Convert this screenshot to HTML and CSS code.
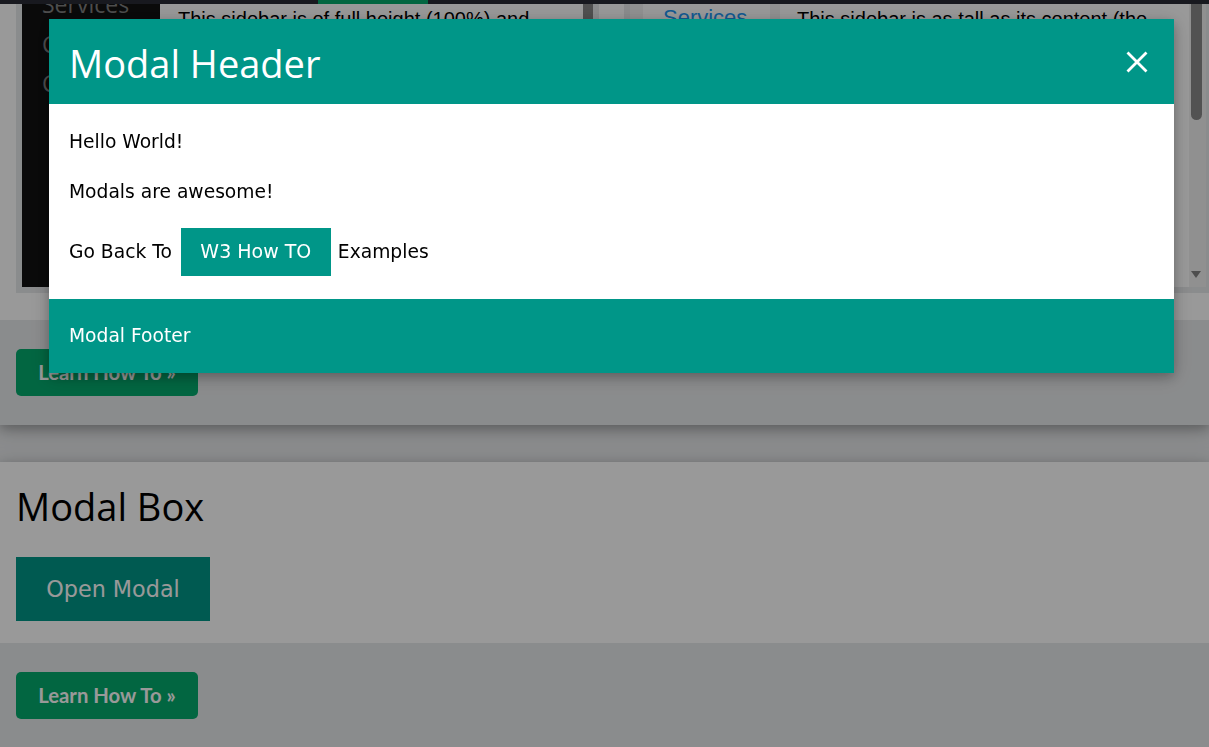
FILE: index.html
```html
<!DOCTYPE html>
<html lang="en">
<head>
<meta charset="utf-8">
<title>Modal Box</title>
<link rel="stylesheet" href="styles.css">
</head>
<body>
<div class="page">
  <div class="topbar"><span class="topbar-active"></span></div>

  <section class="card">
    <div class="card-top demo-row">
      <div class="frame frame-left">
        <nav class="sidenav">
          <a class="sidenav-link">Services</a>
          <a class="sidenav-link">Clients</a>
          <a class="sidenav-link">Contact</a>
        </nav>
        <div class="frame-main">This sidebar is of full height (100%) and always shown.</div>
        <div class="frame-scroll-left"><span class="thumb-left"></span></div>
      </div>
      <div class="frame frame-right">
        <nav class="sidebar-light">
          <a class="sidebar-item">Services</a>
        </nav>
        <div class="frame-main frame-main-right">This sidebar is as tall as its content (the links).</div>
        <div class="frame-scroll-right">
          <span class="thumb-right"></span>
          <span class="arrow-down"></span>
        </div>
      </div>
    </div>
    <div class="card-bottom"><a class="learn-btn">Learn How To »</a></div>
  </section>

  <section class="card card-second">
    <div class="card-top modal-demo">
      <h2 class="demo-title">Modal Box</h2>
      <button class="open-btn">Open Modal</button>
    </div>
    <div class="card-bottom"><a class="learn-btn">Learn How To »</a></div>
  </section>
</div>

<div class="overlay">
  <div class="modal">
    <header class="modal-header">
      <h2 class="modal-title">Modal Header</h2>
      <span class="modal-close" aria-label="Close">
        <svg width="22" height="22" viewBox="0 0 22 22"><path d="M1.5 1.5 L20.5 20.5 M20.5 1.5 L1.5 20.5" stroke="#fff" stroke-width="2.8" fill="none"/></svg>
      </span>
    </header>
    <div class="modal-body">
      <p>Hello World!</p>
      <p>Modals are awesome!</p>
      <p class="links-line"><span>Go Back To</span><a class="howto-btn">W3 How TO</a><span>Examples</span></p>
    </div>
    <footer class="modal-footer">
      <p>Modal Footer</p>
    </footer>
  </div>
</div>
</body>
</html>
```

FILE: styles.css
```css
* { box-sizing: border-box; }
html, body { margin: 0; height: 100%; }
body {
  background: #E7E9EB;
  overflow: hidden;
  font-family: "DejaVu Sans", Verdana, sans-serif;
}
.page { width: 1209px; }

.topbar {
  height: 4px;
  background: #282A35;
  display: flex;
  padding-left: 318px;
  position: relative;
  z-index: 2;
}
.topbar-active { width: 110px; background: #04AA6D; }

.card {
  background: #fff;
  box-shadow: 0 4px 10px 0 rgba(0,0,0,0.2), 0 4px 20px 0 rgba(0,0,0,0.19);
  position: relative;
  z-index: 1;
}
.card-second { margin-top: 37px; z-index: 0; }

.demo-row {
  height: 316px;
  display: flex;
  gap: 25px;
  padding: 0 0 27px 16px;
  overflow: hidden;
}
.frame {
  flex-shrink: 0;
  height: 289px;
  border: 0 solid #E7E9EB;
  border-width: 0 6px 6px 6px;
  display: flex;
  overflow: hidden;
  font-family: "Liberation Sans", Arial, sans-serif;
}
.frame-left { width: 583px; }
.frame-right { width: 588px; }

.sidenav {
  width: 138px;
  flex-shrink: 0;
  background: #111;
  display: flex;
  flex-direction: column;
}
.sidenav-link {
  display: block;
  padding-left: 20px;
  font: 400 23px/39.5px "Open Sans", sans-serif;
  color: #818181;
}
.sidenav-link:first-child { margin-top: -19px; }

.frame-main {
  flex: 1;
  min-width: 0;
  padding: 0 18px;
  font-size: 20px;
  line-height: 30px;
  color: #000;
  overflow: hidden;
}
.frame-scroll-left { width: 10px; flex-shrink: 0; }
.thumb-left { display: block; width: 10px; height: 120px; background: #868686; }

.sidebar-light {
  width: 150px;
  flex-shrink: 0;
  background: #f1f1f1;
  padding-left: 13px;
}
.sidebar-item {
  display: block;
  width: 127px;
  height: 44px;
  background: #fff;
  padding-left: 20px;
  font-size: 22px;
  line-height: 28px;
  color: #2196F3;
}
.frame-main-right { padding-left: 17px; }
.frame-scroll-right {
  width: 17px;
  flex-shrink: 0;
  background: #f1f1f1;
  display: flex;
  flex-direction: column;
  justify-content: space-between;
  padding: 0 4px 9px 2px;
}
.thumb-right {
  display: block;
  width: 11px;
  height: 116px;
  background: #898989;
  border-radius: 0 0 6px 6px;
}
.arrow-down {
  display: block;
  width: 0;
  height: 0;
  border-left: 5.5px solid transparent;
  border-right: 5.5px solid transparent;
  border-top: 7px solid #838383;
}

.card-bottom {
  background: #E7E9EB;
  padding: 29px 16px;
}
.learn-btn {
  display: flex;
  align-items: center;
  justify-content: center;
  width: 182px;
  height: 47px;
  background: #04AA6D;
  color: #fff;
  border-radius: 5px;
  font: 700 20.3px/1 "Lato", sans-serif;
}

.modal-demo { padding: 24px 16px 22px; }
.demo-title {
  margin: 0 0 31px;
  font: 400 38px/40px "Open Sans", sans-serif;
  color: #000;
}
.open-btn {
  display: flex;
  align-items: center;
  justify-content: center;
  width: 194px;
  height: 64px;
  border: 0;
  padding: 0;
  background: #009688;
  color: #fff;
  font-family: "DejaVu Sans", Verdana, sans-serif;
  font-size: 22.3px;
}

/* modal */
.overlay {
  position: fixed;
  inset: 0;
  z-index: 10;
  background: rgba(0,0,0,0.4);
  padding: 19px 0 0 49px;
}
.modal {
  width: 1125px;
  background: #fff;
  box-shadow: 0 4px 10px 0 rgba(0,0,0,0.2), 0 4px 20px 0 rgba(0,0,0,0.19);
}
.modal-header {
  height: 85px;
  background: #009688;
  color: #fff;
  display: flex;
  justify-content: space-between;
  align-items: flex-start;
  padding: 24px 26px 0 20px;
}
.modal-title {
  margin: 0;
  font: 400 38px/40px "Open Sans", sans-serif;
}
.modal-close { display: block; width: 22px; height: 22px; margin-top: 8px; }
.modal-close svg { display: block; }

.modal-body {
  display: flex;
  flex-direction: column;
  gap: 23px;
  padding: 24px 20px 23px;
  font-size: 18.7px;
  line-height: 27px;
  color: #000;
}
.modal-body p { margin: 0; }
.links-line { display: flex; align-items: baseline; }
.howto-btn {
  display: block;
  width: 150px;
  margin: 0 7px 0 9px;
  padding: 10px 0 11px;
  text-align: center;
  background: #009688;
  color: #fff;
  font-size: 19px;
  line-height: 27px;
}
.modal-footer {
  background: #009688;
  color: #fff;
  padding: 23px 20px 24px;
  font-size: 18.7px;
  line-height: 27px;
}
.modal-footer p { margin: 0; }
```
